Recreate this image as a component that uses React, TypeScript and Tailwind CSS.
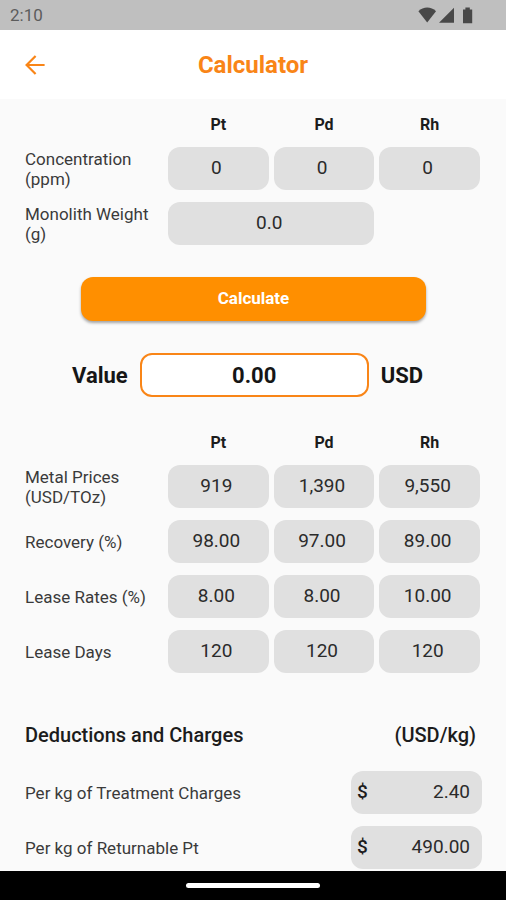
import React from "react";

const metals = ["Pt", "Pd", "Rh"];

const rates = [
  { label: ["Metal Prices", "(USD/TOz)"], values: ["919", "1,390", "9,550"] },
  { label: ["Recovery (%)"], values: ["98.00", "97.00", "89.00"] },
  { label: ["Lease Rates (%)"], values: ["8.00", "8.00", "10.00"] },
  { label: ["Lease Days"], values: ["120", "120", "120"] },
];

const charges = [
  { id: "treatment", label: "Per kg of Treatment Charges", value: "2.40" },
  { id: "returnable-pt", label: "Per kg of Returnable Pt", value: "490.00" },
];

const fieldClass =
  "h-[43px] w-full min-w-0 rounded-xl bg-[#e0e0e0] pr-1 pb-0.5 text-center text-[19px] text-[#2b2b2b] outline-none";

function Lines({ lines }: { lines: string[] }) {
  return (
    <>
      {lines.map((line) => (
        <span key={line} className="block">
          {line}
        </span>
      ))}
    </>
  );
}

function MetalHeader() {
  return (
    <div className="grid grid-cols-[138px_1fr_1fr_1fr] gap-x-[5px] text-center text-base leading-5 font-bold text-[#1c1c1c]">
      <span />
      {metals.map((metal) => (
        <span key={metal}>{metal}</span>
      ))}
    </div>
  );
}

function MetalRow({ label, values }: { label: string[]; values: string[] }) {
  return (
    <div
      role="group"
      aria-label={label.join(" ")}
      className="grid grid-cols-[138px_1fr_1fr_1fr] items-center gap-x-[5px]"
    >
      <span className="text-[17px] leading-5 text-[#3a3a3a]">
        <Lines lines={label} />
      </span>
      {values.map((value, i) => (
        <input
          key={metals[i]}
          aria-label={`${label.join(" ")} ${metals[i]}`}
          inputMode="decimal"
          defaultValue={value}
          className={fieldClass}
        />
      ))}
    </div>
  );
}

function StatusBar() {
  return (
    <div className="flex h-[30px] items-center justify-between bg-[#bfbfbf] pr-8 pl-[10px] text-[#484848]">
      <span className="text-[17px] leading-5 text-[#5c5c5c]">2:10</span>
      <svg width="56" height="18" viewBox="0 0 56 18" fill="currentColor" aria-hidden="true">
        <path d="M0.4 5.2C2.8 2.8 6 1.6 9.2 1.6s6.400 1.200 8.800 3.600L9.200 16.400Z" />
        <path d="M36 1.800V16.800H21Z" />
        <path d="M45 3.600h2.400V1.600h4.400v2H54.200V17.200H45Z" />
      </svg>
    </div>
  );
}

export default function App() {
  return (
    <div className="flex min-h-screen flex-col bg-[#fafafa] font-[Roboto,sans-serif]">
      <StatusBar />
      <header className="grid h-[69px] grid-cols-[44px_1fr_44px] items-center bg-white px-[13px] text-[#f98517]">
        <button type="button" aria-label="Back" className="flex h-11 w-11 items-center justify-center">
          <svg
            width="20"
            height="20"
            viewBox="0 0 20 20"
            fill="none"
            stroke="currentColor"
            strokeWidth="2.2"
            aria-hidden="true"
          >
            <path d="M19.600 10H2M10.600 1L1.600 10L10.600 19" />
          </svg>
        </button>
        <h1 className="text-center text-2xl font-bold">Calculator</h1>
      </header>

      <main className="flex-1 pr-[26px] pl-[25px]">
        <section className="flex flex-col gap-3 pt-4">
          <MetalHeader />
          <MetalRow label={["Concentration", "(ppm)"]} values={["0", "0", "0"]} />
          <div className="grid grid-cols-[138px_1fr_1fr_1fr] items-center gap-x-[5px]">
            <label htmlFor="weight" className="text-[17px] leading-5 text-[#3a3a3a]">
              <Lines lines={["Monolith Weight", "(g)"]} />
            </label>
            <div className="col-span-2 flex">
              <input id="weight" inputMode="decimal" defaultValue="0.0" className={fieldClass} />
            </div>
          </div>
        </section>

        <div className="pt-8 pr-[54px] pl-14">
          <button
            type="button"
            className="h-11 w-full rounded-xl bg-[#ff8f00] text-[17px] font-bold text-white shadow-[0_2px_3px_rgba(0,0,0,0.35)]"
          >
            Calculate
          </button>
        </div>

        <div className="flex items-center gap-3 pt-8 pr-[57px] pl-[47px] text-[22px] font-bold text-[#161616]">
          <label htmlFor="value">Value</label>
          <input
            id="value"
            readOnly
            defaultValue="0.00"
            className="h-11 w-full min-w-0 flex-1 rounded-xl border-2 border-[#f98517] bg-white text-center outline-none"
          />
          <span>USD</span>
        </div>

        <section className="flex flex-col gap-3 pt-9">
          <MetalHeader />
          {rates.map((row) => (
            <MetalRow key={row.label[0]} label={row.label} values={row.values} />
          ))}
        </section>

        <section className="pt-[50px]">
          <div className="flex items-center justify-between pr-1 text-xl leading-6 font-medium text-[#1c1c1c]">
            <h2>Deductions and Charges</h2>
            <span>(USD/kg)</span>
          </div>
          <div className="-mr-0.5 flex flex-col gap-3 pt-6">
            {charges.map((charge) => (
              <div key={charge.id} className="flex items-center justify-between">
                <label htmlFor={charge.id} className="text-[17px] leading-5 text-[#3a3a3a]">
                  {charge.label}
                </label>
                <div className="flex h-[43px] w-[131px] items-center rounded-xl bg-[#e0e0e0] pr-3 pl-1.5 text-[19px]">
                  <span className="font-medium text-[#1c1c1c]">$</span>
                  <input
                    id={charge.id}
                    inputMode="decimal"
                    defaultValue={charge.value}
                    className="w-full min-w-0 flex-1 text-right text-[#2b2b2b] outline-none"
                  />
                </div>
              </div>
            ))}
          </div>
        </section>
      </main>

      <footer className="flex h-[29px] items-center justify-center bg-black">
        <div className="h-[5px] w-[134px] rounded-full bg-white" />
      </footer>
    </div>
  );
}
